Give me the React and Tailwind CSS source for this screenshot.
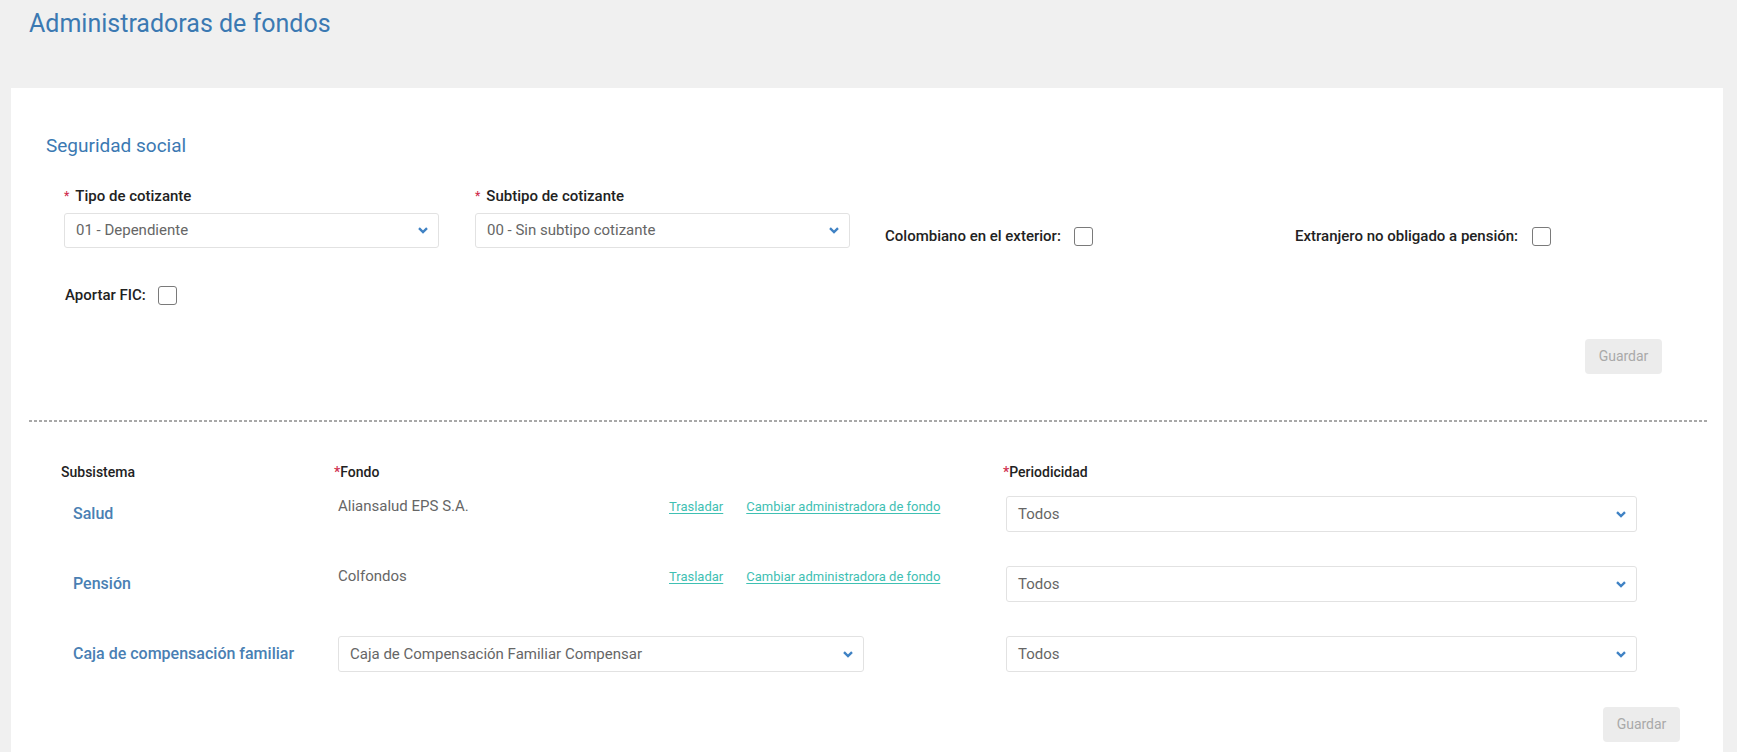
import React from "react";

function Chevron() {
  return (
    <svg width="10" height="7" viewBox="0 0 10 7" className="shrink-0">
      <path d="M1 1.2 L5 5 L9 1.2" fill="none" stroke="#3f82c4" strokeWidth="2.4" strokeLinecap="butt" strokeLinejoin="miter" />
    </svg>
  );
}

function Select({ value, className = "" }) {
  return (
    <div
      className={
        "flex h-[35px] items-center justify-between rounded-[3px] border border-[#e2e2e2] bg-white pl-[11px] pr-[10px] text-[15px] text-[#666] " +
        className
      }
    >
      <span>{value}</span>
      <Chevron />
    </div>
  );
}

function Checkbox() {
  return <div className="h-[19px] w-[19px] shrink-0 rounded-[3px] border-[1.5px] border-[#7a7a7a] bg-white" />;
}

function Req() {
  return <span className="mr-[6px] text-[12px] text-[#d0304f]">*</span>;
}

function GuardarBtn({ className = "" }) {
  return (
    <button
      className={
        "flex h-[35px] w-[77px] items-center justify-center rounded-[4px] bg-[#ececec] text-[14px] text-[#a9a9a9] " +
        className
      }
    >
      Guardar
    </button>
  );
}

function FundRow({ name, fund, select }) {
  return (
    <div className="flex h-[36px] items-center">
      <div className="w-[273px] pl-[12px] text-[16px] font-medium text-[#4a7fb3]">{name}</div>
      {select ? (
        <div className="w-[669px] self-start pl-[4px]">
          <Select value={select} className="h-[36px] w-[526px] pl-[10px]" />
        </div>
      ) : (
        <div className="flex w-[669px] self-start pl-[4px]">
          <div className="w-[331px] text-[15px] leading-[20px] text-[#666]">{fund}</div>
          <div className="flex gap-[23px] pt-[1px] text-[13px] leading-[20px] text-[#3fc0b3]">
            <a className="underline underline-offset-2">Trasladar</a>
            <a className="underline underline-offset-2">Cambiar administradora de fondo</a>
          </div>
        </div>
      )}
      <div className="pl-[3px]">
        <Select value="Todos" className="h-[36px] w-[631px] pl-[10px]" />
      </div>
    </div>
  );
}

export default function App() {
  return (
    <div className="min-h-screen bg-[#f0f0f0] font-['Roboto',sans-serif] text-[#222]">
      <div className="h-[88px] pl-[29px] pt-[9px]">
        <h1 className="text-[25px] leading-[30px] font-normal text-[#3b79b2]">Administradoras de fondos</h1>
      </div>
      <div className="ml-[11px] mr-[14px] bg-white pb-[40px]">
        <div className="pl-[35px] pt-[46px] text-[19px] leading-[24px] text-[#3b79b2]">Seguridad social</div>

        <div className="mt-[28px] grid grid-cols-[411px_411px_411px_411px] pl-[53px]">
          <div>
            <div className="flex h-[20px] items-center text-[15px] font-medium">
              <Req />
              Tipo de cotizante
            </div>
            <Select value="01 - Dependiente" className="mt-[7px] w-[375px]" />
          </div>
          <div>
            <div className="flex h-[20px] items-center text-[15px] font-medium">
              <Req />
              Subtipo de cotizante
            </div>
            <Select value="00 - Sin subtipo cotizante" className="mt-[7px] w-[375px]" />
          </div>
          <div className="pt-[40px]">
            <div className="-ml-[1px] flex h-[20px] items-center gap-[13px] text-[15px] font-medium">
              <span>Colombiano en el exterior:</span>
              <Checkbox />
            </div>
          </div>
          <div className="pt-[40px]">
            <div className="-ml-[2px] flex h-[20px] items-center gap-[14px] text-[15px] font-medium">
              <span>Extranjero no obligado a pensión:</span>
              <Checkbox />
            </div>
          </div>
        </div>

        <div className="mt-[37px] flex h-[20px] items-center gap-[12px] pl-[54px] text-[15px] font-medium">
          <span>Aportar FIC:</span>
          <Checkbox />
        </div>

        <div className="mt-[34px] flex justify-end pr-[61px]">
          <GuardarBtn />
        </div>

        <div className="ml-[18px] mr-[15px] mt-[46px] h-[2px] bg-[repeating-linear-gradient(to_right,#a8a8a8_0px,#a8a8a8_3px,transparent_3px,transparent_5px)]" />

        <div className="mt-[40px] flex h-[20px] items-center pl-[50px] text-[14px] font-medium">
          <div className="w-[273px]">Subsistema</div>
          <div className="w-[669px]">
            <span className="text-[#d0304f]">*</span>Fondo
          </div>
          <div>
            <span className="text-[#d0304f]">*</span>Periodicidad
          </div>
        </div>

        <div className="mt-[14px] flex flex-col gap-[34px] pl-[50px]">
          <FundRow name="Salud" fund="Aliansalud EPS S.A." />
          <FundRow name="Pensión" fund="Colfondos" />
          <FundRow name="Caja de compensación familiar" select="Caja de Compensación Familiar Compensar" />
        </div>

        <div className="mt-[35px] flex justify-end pr-[43px]">
          <GuardarBtn />
        </div>
      </div>
    </div>
  );
}
